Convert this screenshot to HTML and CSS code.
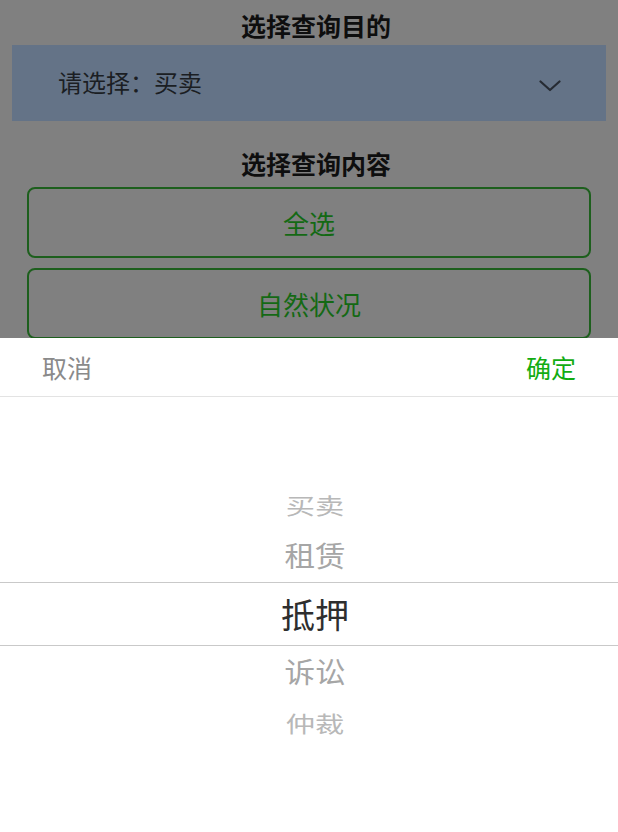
FILE: index.html
```html
<!DOCTYPE html>
<html lang="zh-CN">
<head>
<meta charset="utf-8">
<meta name="viewport" content="width=device-width, initial-scale=1">
<title>选择查询</title>
<link rel="stylesheet" href="styles.css">
</head>
<body>
<div class="page">
  <div class="title title-first">选择查询目的</div>
  <div class="select">
    <span class="select-text">请选择：买卖</span>
    <svg class="chevron" width="22" height="12" viewBox="0 0 22 12"><polyline points="1.5,1.5 11,10 20.5,1.5" fill="none" stroke="#262b33" stroke-width="2.2" stroke-linecap="round" stroke-linejoin="round"/></svg>
  </div>
  <div class="title title-second">选择查询内容</div>
  <div class="options">
    <div class="option">全选</div>
    <div class="option">自然状况</div>
    <div class="option">权利状况</div>
  </div>
</div>

<div class="sheet">
  <div class="sheet-head">
    <span class="cancel">取消</span>
    <span class="confirm">确定</span>
  </div>
  <div class="picker">
    <div class="row row-far"><span class="label">买卖</span></div>
    <div class="row row-near"><span class="label">租赁</span></div>
    <div class="row row-center"><span class="label">抵押</span></div>
    <div class="row row-near"><span class="label">诉讼</span></div>
    <div class="row row-far"><span class="label">仲裁</span></div>
  </div>
</div>
</body>
</html>
```

FILE: styles.css
```css
* { box-sizing: border-box; }
html, body {
  margin: 0;
  padding: 0;
  height: 100%;
  overflow: hidden;
}
body {
  background: #808080;
  font-family: "Noto Sans CJK SC", "Noto Sans", sans-serif;
}
.page {
  padding: 0 12px;
}
.title {
  text-align: center;
  font-weight: bold;
  font-size: 25px;
  color: #0e0e0e;
  padding-left: 14px;
}
.title-first {
  padding-top: 6px;
  line-height: 38px;
  height: 45px;
}
.select {
  height: 76px;
  background: #647387;
  display: flex;
  align-items: center;
  justify-content: space-between;
  padding: 0 45px 0 46px;
}
.select-text {
  font-size: 24px;
  color: #1b1e23;
  margin-bottom: 4px;
}
.chevron {
  display: block;
  margin-top: 6px;
}
.title-second {
  padding-top: 27px;
  line-height: 30px;
  height: 66px;
}
.options {
  display: flex;
  flex-direction: column;
  gap: 10px;
  padding: 0 15px;
}
.option {
  height: 71px;
  border: 2px solid #1d5f1d;
  border-radius: 8px;
  display: flex;
  align-items: center;
  justify-content: center;
  font-size: 26px;
  color: #146914;
}
.sheet {
  position: fixed;
  left: 0;
  right: 0;
  bottom: 0;
  top: 338px;
  background: #fff;
}
.sheet-head {
  height: 59px;
  border-bottom: 1px solid #e3e3e3;
  display: flex;
  align-items: center;
  justify-content: space-between;
  padding: 0 42px;
  font-size: 25px;
}
.cancel { color: #8a8a8a; }
.confirm { color: #12ac12; }
.picker {
  padding-top: 83px;
  display: flex;
  flex-direction: column;
  align-items: center;
}
.row {
  width: 100%;
  display: flex;
  align-items: center;
  justify-content: center;
  padding-left: 12px;
}
.label {
  display: block;
  font-size: 34px;
  line-height: 1;
}
.row-far { height: 50px; }
.row-far .label {
  color: #b8b8b8;
  transform: scale(0.86, 0.64);
}
.row-near { height: 52px; }
.row-near .label {
  color: #a6a6a6;
  transform: scale(0.9, 0.82);
}
.row-center {
  height: 64px;
  border-top: 1px solid #c9c9c9;
  border-bottom: 1px solid #c9c9c9;
}
.row-center .label {
  color: #2e2e2e;
}
```
